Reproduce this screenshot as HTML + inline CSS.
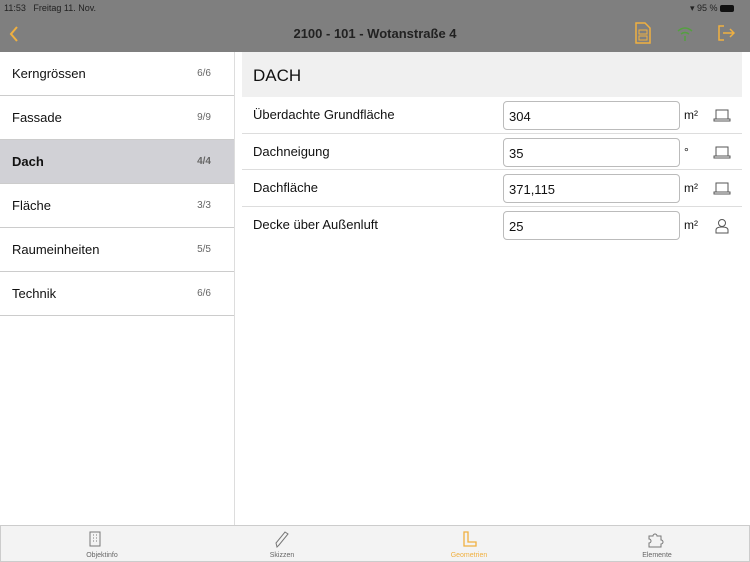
<!DOCTYPE html>
<html><head><meta charset="utf-8"><style>
*{margin:0;padding:0;box-sizing:border-box}
body{width:750px;height:562px;overflow:hidden;background:#fff;font-family:"Liberation Sans",sans-serif;position:relative;color:#111}
.top{position:absolute;left:0;top:0;width:750px;height:52px;background:#7f7f7f}
.status{position:absolute;top:3px;font-size:9px;color:#222}
.title{position:absolute;top:26px;width:750px;text-align:center;font-size:13px;font-weight:bold;color:#222}
.side{position:absolute;left:0;top:52px;width:235px;height:473px;border-right:1px solid #ddd}
.row{height:44px;border-bottom:1px solid #ccc;display:flex;align-items:center;justify-content:space-between;padding:0 23px 0 12px;font-size:13px}
.row span{font-size:10px;color:#666}
.sel{background:#d1d1d6;font-weight:bold}
.main{position:absolute;left:242px;top:52px;width:500px}
.hd{height:45px;background:#f0f0f0;font-size:17px;padding:14px 0 0 11px}
.r{height:36.5px;border-bottom:1px solid #ddd;position:relative;font-size:13px}
.r .l{position:absolute;left:11px;top:10px}
.r .in{position:absolute;left:261px;top:4px;width:177px;height:29px;border:1px solid #bbb;border-radius:4px;padding:7px 0 0 5px;font-size:13px}
.r .u{position:absolute;left:442px;top:11px;font-size:12px}
.r svg{position:absolute;left:471px;top:11px}
.tab{position:absolute;left:0;top:525px;width:750px;height:37px;background:#f3f3f3;border:1px solid #ccc}
.t{position:absolute;top:26px;font-size:7px;color:#666;text-align:center;width:80px}
</style></head><body>
<div class="top">
<div class="status" style="left:4px">11:53&nbsp;&nbsp; Freitag 11. Nov.</div>
<div class="status" style="left:690px">&#9662; 95 % <span style="display:inline-block;width:14px;height:7px;background:#111;border-radius:2px;vertical-align:middle"></span></div>
<svg style="position:absolute;left:8px;top:26px" width="12" height="16"><path d="M9 1L3 8l6 7" stroke="#f0b040" stroke-width="2" fill="none"/></svg>
<div class="title">2100 - 101 - Wotanstraße 4</div>
<svg style="position:absolute;left:634px;top:22px" width="18" height="22"><path d="M2 1h9l5 5v15H2z" stroke="#f0b040" stroke-width="1.5" fill="none"/><rect x="5" y="8" width="8" height="4" stroke="#f0b040" fill="none"/><rect x="5" y="14" width="8" height="4" stroke="#f0b040" fill="none"/></svg>
<svg style="position:absolute;left:677px;top:26px" width="16" height="16"><path d="M1 5q7-6 14 0M4 8q4-3 8 0M8 10v5" stroke="#55a040" stroke-width="1.5" fill="none"/></svg>
<svg style="position:absolute;left:717px;top:25px" width="18" height="16"><path d="M7 1H2v14h5M6 8h11M13 4l4 4-4 4" stroke="#f0b040" stroke-width="1.5" fill="none"/></svg>
</div>
<div class="side">
<div class="row">Kerngrössen<span>6/6</span></div>
<div class="row">Fassade<span>9/9</span></div>
<div class="row sel">Dach<span>4/4</span></div>
<div class="row">Fläche<span>3/3</span></div>
<div class="row">Raumeinheiten<span>5/5</span></div>
<div class="row">Technik<span>6/6</span></div>
</div>
<div class="main">
<div class="hd">DACH</div>
<div class="r"><div class="l">Überdachte Grundfläche</div><div class="in">304</div><div class="u">m²</div><svg width="18" height="14"><path d="M3 2h12v9H3zM1 11h16v2H1z" stroke="#555" fill="none"/></svg></div>
<div class="r"><div class="l">Dachneigung</div><div class="in">35</div><div class="u">°</div><svg width="18" height="14"><path d="M3 2h12v9H3zM1 11h16v2H1z" stroke="#555" fill="none"/></svg></div>
<div class="r"><div class="l">Dachfläche</div><div class="in">371,115</div><div class="u">m²</div><svg width="18" height="14"><path d="M3 2h12v9H3zM1 11h16v2H1z" stroke="#555" fill="none"/></svg></div>
<div class="r" style="border:none"><div class="l">Decke über Außenluft</div><div class="in">25</div><div class="u">m²</div><svg width="18" height="16"><circle cx="9" cy="5" r="3.5" stroke="#555" fill="none"/><path d="M3 15v-3q0-3 6-3t6 3v3z" stroke="#555" fill="none"/></svg></div>
</div>
<div class="tab">
<svg style="position:absolute;left:88px;top:5px" width="12" height="16"><rect x="1" y="1" width="10" height="14" stroke="#777" fill="none"/><path d="M4 4h1M7 4h1M4 7h1M7 7h1M4 10h1M7 10h1" stroke="#777"/></svg>
<div class="t" style="left:61px">Objektinfo</div>
<svg style="position:absolute;left:273px;top:4px" width="16" height="18"><path d="M3 17l-1-4 9-11 3 2-9 11z" stroke="#777" fill="none"/></svg>
<div class="t" style="left:241px">Skizzen</div>
<svg style="position:absolute;left:462px;top:5px" width="14" height="16"><path d="M1 1h4v10h8v4H1z" stroke="#f0b040" stroke-width="1.3" fill="none"/></svg>
<div class="t" style="left:428px;color:#f0b040">Geometrien</div>
<svg style="position:absolute;left:646px;top:4px" width="18" height="18"><path d="M2 6h4a2 2 0 1 1 4 0h4v4a2 2 0 1 1 0 4v3H2v-4a2 2 0 1 0 0-4z" stroke="#777" fill="none"/></svg>
<div class="t" style="left:616px">Elemente</div>
</div>
</body></html>
